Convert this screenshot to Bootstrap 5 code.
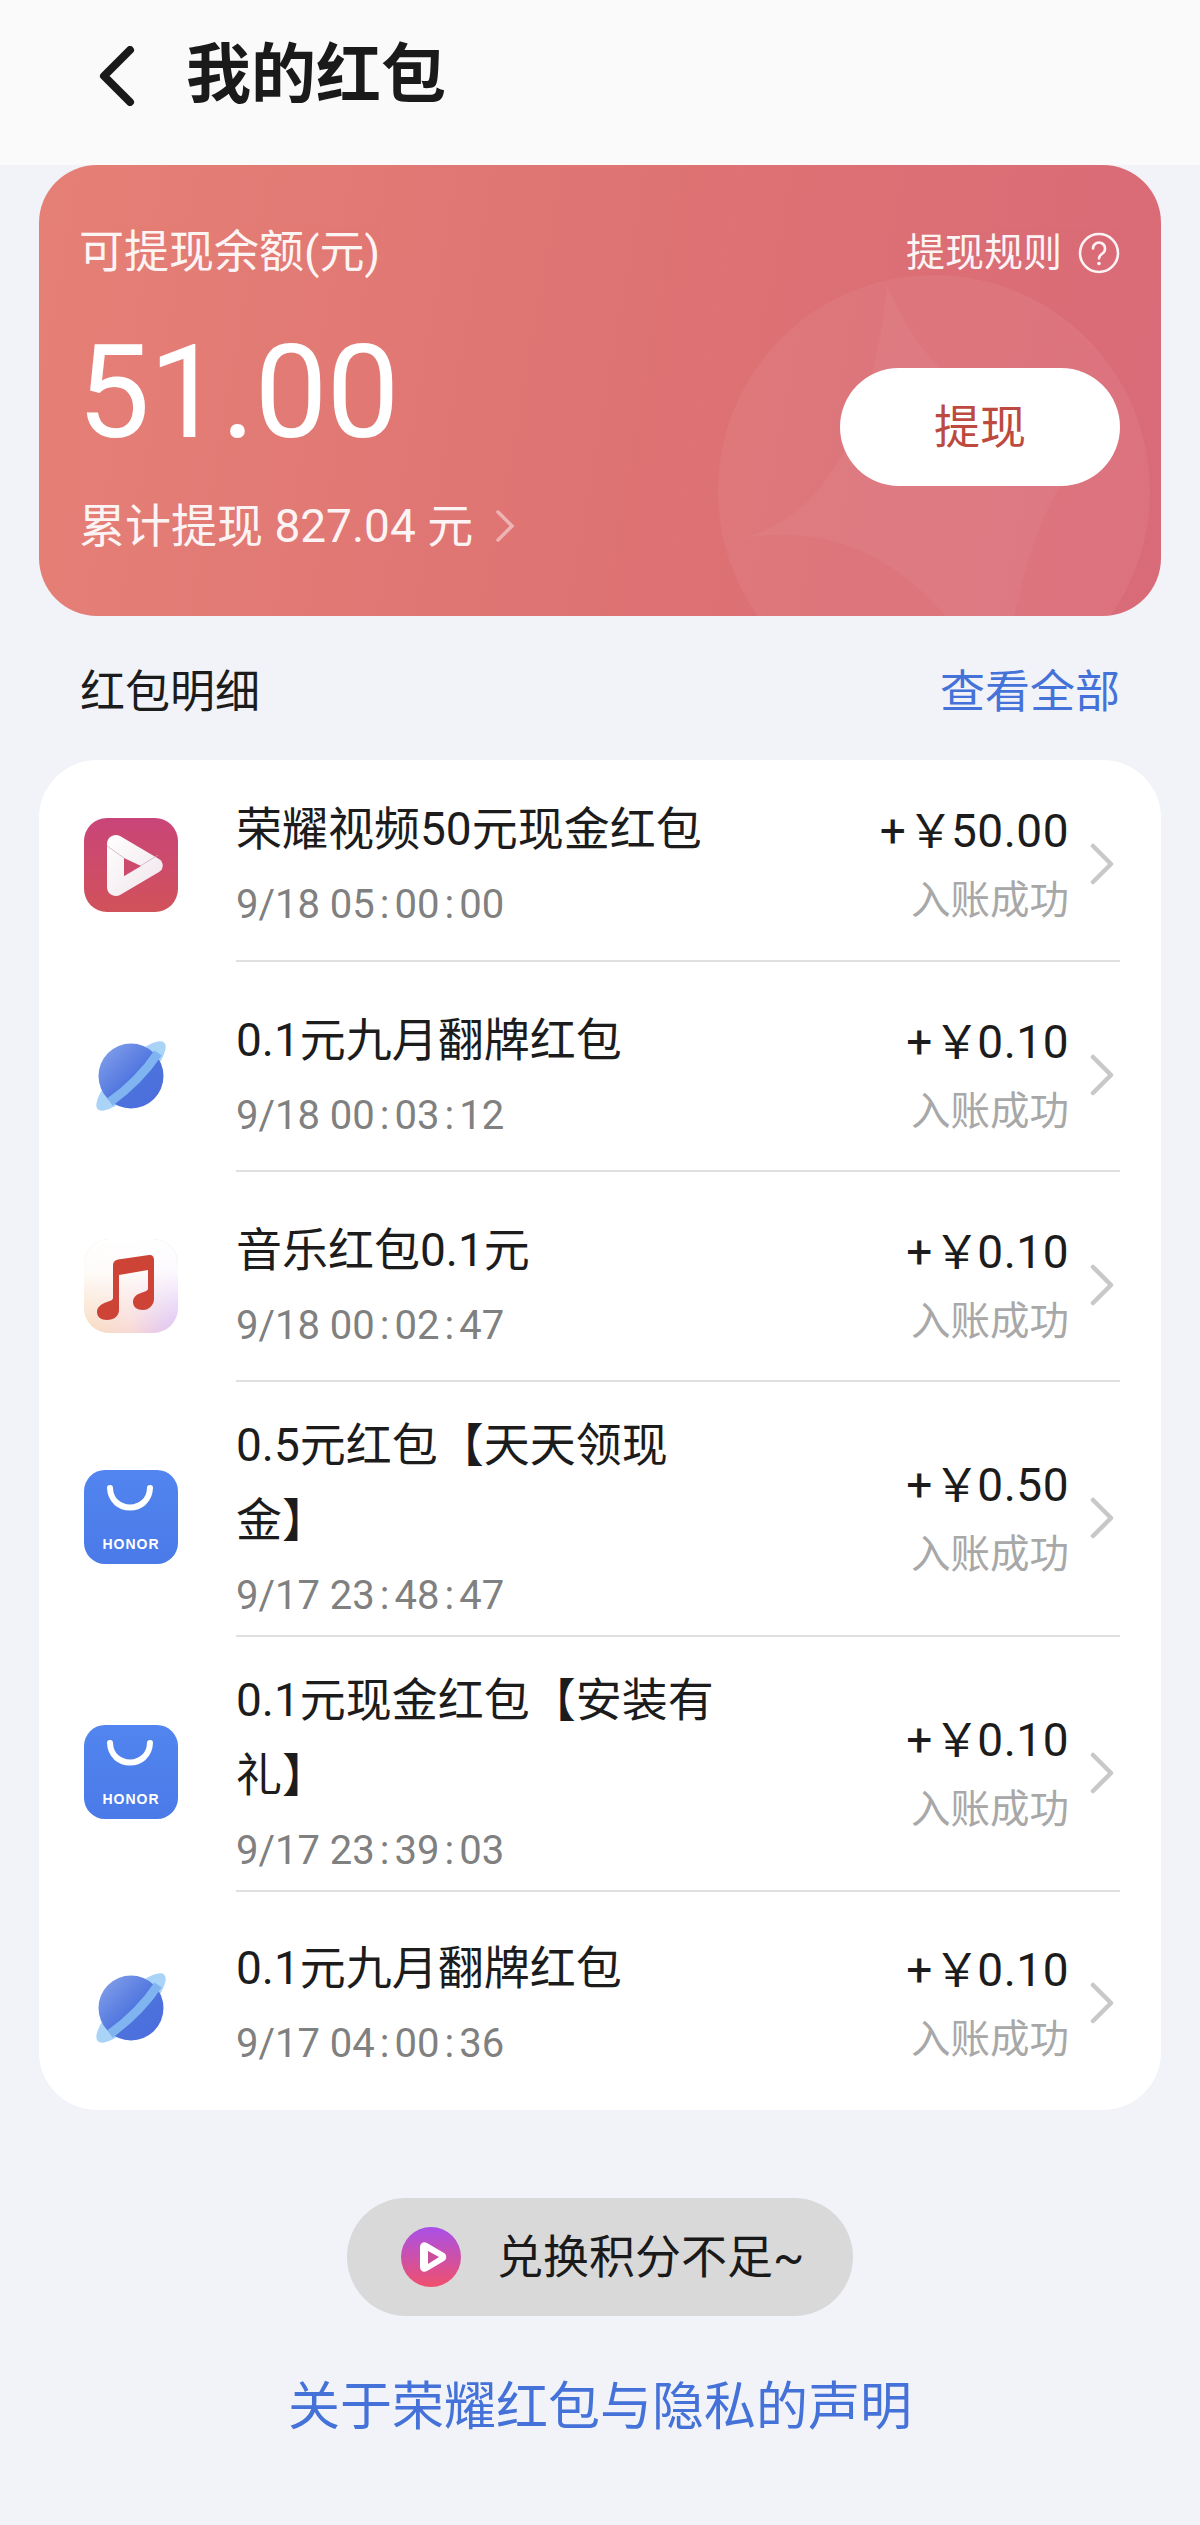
<!DOCTYPE html>
<html lang="zh-CN">
<head>
<meta charset="utf-8">
<title>我的红包</title>
<link rel="stylesheet" href="https://cdn.jsdelivr.net/npm/bootstrap@5.3.0/dist/css/bootstrap.min.css">
<style>
html,body{margin:0;padding:0}
body{width:1200px;height:2525px;overflow:hidden;background:#f1f3f9;color:#1c1c1c;font-family:Roboto,"Noto Sans CJK SC",sans-serif}
.top-head{height:165px;background:#fafafa;padding-left:98px;padding-bottom:14px;gap:48px}
.top-head h1{font-size:65px;line-height:1;margin:0;font-weight:700;color:#1a1a1a}
.hero{height:451px;margin:0 39px;border-radius:58px;background:linear-gradient(100deg,#e58076 0%,#de7273 55%,#d96a78 100%);color:#fff;overflow:hidden;padding:60px 41px 0 40px}
.hero-art{position:absolute;left:679px;top:110px;width:432px;height:432px}
.hero-l{font-size:45px;line-height:56px;opacity:.92}
.hero-r{font-size:39px;line-height:56px;gap:16px;opacity:.92}
.hero-num{font-size:130px;line-height:130px;margin-top:47px;letter-spacing:-1px;margin-left:-2px}
.hero-sum{font-size:46px;line-height:56px;margin-top:40px;gap:22px;opacity:.92}
.hero-btn{position:absolute;right:41px;top:203px;width:280px;height:118px;border-radius:59px;background:#fff;color:#bd4a40;border:0;font-size:46px;line-height:1;padding:0}
.sec-head{height:144px;padding:10px 41px 0;margin:0 39px;font-size:45px}
.blue-t{color:#4472d8}
.sheet{margin:0 39px;background:#fff;border-radius:58px;height:1350px}
.rec{display:flex}
.rec-icon{width:197px;flex:none;padding-left:45px;padding-top:17px;display:flex;align-items:center}
.rec-body{flex:1;margin-right:41px;padding:24px 6px 7px 0;min-height:210px;border-bottom:2px solid #e0e0e0;display:flex;align-items:center;box-sizing:border-box}
.rec.first .rec-body{min-height:202px;padding-top:15px}
.rec.tall .rec-body{padding-top:23px;padding-bottom:5px}
.rec.tall .rec-icon{padding-top:15px}
.rec.last .rec-body{min-height:219px;padding-top:21px;padding-bottom:19px;border-bottom:0}
.rec.last .rec-icon{padding-top:12px}
.rec.first .rec-icon{padding-top:8px}
.rec-text{width:480px;flex:none;padding-top:3px;margin-bottom:-3px}
.rec-title{font-size:46px;line-height:75px;color:#1c1c1c}
.rec-date{font-size:40px;line-height:75px;color:#808080}
.rec-date i{font-style:normal;margin:0 5px}
.rec-side{margin-left:auto;text-align:right}
.rec-amt{font-size:46px;line-height:70px;color:#1c1c1c;letter-spacing:.5px}
.rec-amt b{font-weight:400;font-family:"Noto Sans CJK SC",sans-serif;margin:0 -3px 0 1px}
.rec-st{font-size:39.5px;line-height:70px;color:#a8a8a8}
.rec-arrow{margin-left:21px;flex:none}
.toast-pill{width:506px;height:118px;margin:88px auto 0;border-radius:59px;background:#d9d9d9;padding-left:54px;gap:36px;font-size:46px;line-height:1;color:#1a1a1a}
.foot-link{margin-top:61px;font-size:52px;line-height:62px;text-align:center}
</style>
</head>
<body>
<header class="top-head d-flex align-items-center">
  <svg width="40" height="60" viewBox="0 0 40 60" aria-hidden="true"><path d="M32 4 6 30l26 26" fill="none" stroke="#1a1a1a" stroke-width="8" stroke-linecap="round" stroke-linejoin="round"/></svg>
  <h1>我的红包</h1>
</header>

<section class="hero position-relative">
  <svg class="hero-art" viewBox="0 0 432 432" aria-hidden="true">
    <circle cx="216" cy="216" r="216" fill="#fff" fill-opacity=".055"/>
    <path d="M169 10Q235 170 422 160Q318 154 282 425Q186 236 25 263Q147 230 169 10Z" fill="#fff" fill-opacity=".04"/>
  </svg>
  <div class="d-flex justify-content-between align-items-center position-relative">
    <div class="hero-l">可提现余额(元)</div>
    <div class="hero-r d-flex align-items-center">提现规则
      <svg width="42" height="42" viewBox="0 0 42 42" aria-hidden="true"><circle cx="21" cy="21" r="19" fill="none" stroke="#fff" stroke-width="2.6"/><path d="M15 16.5a6 6 0 1 1 9.4 5c-2.2 1.5-3.4 2.4-3.4 5" fill="none" stroke="#fff" stroke-width="2.6" stroke-linecap="round"/><circle cx="21" cy="31.5" r="1.8" fill="#fff"/></svg>
    </div>
  </div>
  <div class="hero-num position-relative">51.00</div>
  <div class="hero-sum d-flex align-items-center position-relative">累计提现 827.04 元
    <svg width="20" height="34" viewBox="0 0 20 34" aria-hidden="true"><path d="M3 3l14 14L3 31" fill="none" stroke="#fff" stroke-opacity=".5" stroke-width="3.5" stroke-linecap="round"/></svg>
  </div>
  <button class="hero-btn" type="button">提现</button>
</section>

<div class="sec-head d-flex justify-content-between align-items-center">
  <span>红包明细</span><span class="blue-t">查看全部</span>
</div>

<svg width="0" height="0" class="position-absolute" aria-hidden="true">
  <defs>
    <linearGradient id="gv" x1="0" y1="0" x2="0" y2="1"><stop offset="0" stop-color="#c94579"/><stop offset="1" stop-color="#d1525a"/></linearGradient>
    <linearGradient id="gw" x1="0" y1="0" x2="1" y2="1"><stop offset="0" stop-color="#fff"/><stop offset="1" stop-color="#efe4ea"/></linearGradient>
    <linearGradient id="gp" x1="0" y1="0" x2="1" y2="1"><stop offset="0" stop-color="#8aa6ec"/><stop offset=".55" stop-color="#4d73de"/><stop offset="1" stop-color="#4a6cdb"/></linearGradient>
    <linearGradient id="gh" x1="0" y1="0" x2="0" y2="1"><stop offset="0" stop-color="#5285ef"/><stop offset="1" stop-color="#4a7ae8"/></linearGradient>
    <linearGradient id="gm" x1="0" y1="0" x2="1" y2="0"><stop offset="0" stop-color="#f8dcc0"/><stop offset=".5" stop-color="#f8d9d6"/><stop offset="1" stop-color="#dcc0f6"/></linearGradient>
    <linearGradient id="gm2" x1="0" y1="0" x2="0" y2="1"><stop offset="0" stop-color="#fff"/><stop offset=".35" stop-color="#fff" stop-opacity=".9"/><stop offset="1" stop-color="#fff" stop-opacity="0"/></linearGradient>
    <linearGradient id="gt" x1="0" y1="0" x2="0" y2="1"><stop offset="0" stop-color="#a950e8"/><stop offset="1" stop-color="#f0506c"/></linearGradient>
    <symbol id="ic-video" viewBox="0 0 94 94">
      <rect width="94" height="94" rx="23" fill="url(#gv)"/>
      <path d="M23 26c0-7 7-11 13-8l39 23c5 3 5 10 0 13L36 77c-6 3-13-1-13-8Z" fill="url(#gw)"/>
      <path d="M23 28 40 40M74 37 40 58" fill="none" stroke="#c9a4b6" stroke-width=".7"/>
      <path d="M40 40 57 48 40 58Z" fill="#cc4a6c"/>
    </symbol>
    <symbol id="ic-planet" viewBox="0 0 94 94">
      <ellipse cx="47" cy="47" rx="47" ry="14" transform="rotate(-45 47 47)" fill="#a9d3f7"/>
      <circle cx="47" cy="47" r="32.5" fill="url(#gp)"/>
      <path d="M74 24C62 42 44 60 26 73" fill="none" stroke="#7fb4f1" stroke-width="9"/>
    </symbol>
    <symbol id="ic-music" viewBox="0 0 94 94">
      <rect width="94" height="94" rx="25" fill="url(#gm)"/>
      <rect width="94" height="94" rx="25" fill="url(#gm2)"/>
      <path d="M29 26c0-3 2-5 5-5.500L65 16c3-.5 5 1.500 5 4.500V60c0 6-5 11-11 11-6 0-10-3-10-8 0-5 4-8 9-9.500 3-1 6-1.500 6-4V31L35 36V71c0 6-5 10-12 10-6 0-10-3-10-8 0-5 4-8 10-10 3-1 6-2 6-4Z" fill="#cd4437"/>
    </symbol>
    <symbol id="ic-honor" viewBox="0 0 94 94">
      <rect width="94" height="94" rx="21" fill="url(#gh)"/>
      <path d="M26 18C27 44 65 44 66 18" fill="none" stroke="#fff" stroke-width="6" stroke-linecap="round"/>
      <text x="47" y="79" text-anchor="middle" font-family="'Liberation Sans',sans-serif" font-weight="700" font-size="14" letter-spacing="1" fill="#fff">HONOR</text>
    </symbol>
    <symbol id="ic-arrow" viewBox="0 0 24 42">
      <path d="M3 3 21 21 3 39" fill="none" stroke="#c8c8c8" stroke-width="4.500" stroke-linecap="round" stroke-linejoin="round"/>
    </symbol>
  </defs>
</svg>

<main class="sheet">
  <div class="rec first">
    <div class="rec-icon"><svg width="94" height="94"><use href="#ic-video"/></svg></div>
    <div class="rec-body">
      <div class="rec-text"><div class="rec-title">荣耀视频50元现金红包</div><div class="rec-date">9/18 05<i>:</i>00<i>:</i>00</div></div>
      <div class="rec-side"><div class="rec-amt">+<b>￥</b>50.00</div><div class="rec-st">入账成功</div></div>
      <svg class="rec-arrow" width="24" height="42"><use href="#ic-arrow"/></svg>
    </div>
  </div>
  <div class="rec">
    <div class="rec-icon"><svg width="94" height="94"><use href="#ic-planet"/></svg></div>
    <div class="rec-body">
      <div class="rec-text"><div class="rec-title">0.1元九月翻牌红包</div><div class="rec-date">9/18 00<i>:</i>03<i>:</i>12</div></div>
      <div class="rec-side"><div class="rec-amt">+<b>￥</b>0.10</div><div class="rec-st">入账成功</div></div>
      <svg class="rec-arrow" width="24" height="42"><use href="#ic-arrow"/></svg>
    </div>
  </div>
  <div class="rec">
    <div class="rec-icon"><svg width="94" height="94"><use href="#ic-music"/></svg></div>
    <div class="rec-body">
      <div class="rec-text"><div class="rec-title">音乐红包0.1元</div><div class="rec-date">9/18 00<i>:</i>02<i>:</i>47</div></div>
      <div class="rec-side"><div class="rec-amt">+<b>￥</b>0.10</div><div class="rec-st">入账成功</div></div>
      <svg class="rec-arrow" width="24" height="42"><use href="#ic-arrow"/></svg>
    </div>
  </div>
  <div class="rec tall">
    <div class="rec-icon"><svg width="94" height="94"><use href="#ic-honor"/></svg></div>
    <div class="rec-body">
      <div class="rec-text"><div class="rec-title">0.5元红包【天天领现金】</div><div class="rec-date">9/17 23<i>:</i>48<i>:</i>47</div></div>
      <div class="rec-side"><div class="rec-amt">+<b>￥</b>0.50</div><div class="rec-st">入账成功</div></div>
      <svg class="rec-arrow" width="24" height="42"><use href="#ic-arrow"/></svg>
    </div>
  </div>
  <div class="rec tall">
    <div class="rec-icon"><svg width="94" height="94"><use href="#ic-honor"/></svg></div>
    <div class="rec-body">
      <div class="rec-text"><div class="rec-title">0.1元现金红包【安装有礼】</div><div class="rec-date">9/17 23<i>:</i>39<i>:</i>03</div></div>
      <div class="rec-side"><div class="rec-amt">+<b>￥</b>0.10</div><div class="rec-st">入账成功</div></div>
      <svg class="rec-arrow" width="24" height="42"><use href="#ic-arrow"/></svg>
    </div>
  </div>
  <div class="rec last">
    <div class="rec-icon"><svg width="94" height="94"><use href="#ic-planet"/></svg></div>
    <div class="rec-body">
      <div class="rec-text"><div class="rec-title">0.1元九月翻牌红包</div><div class="rec-date">9/17 04<i>:</i>00<i>:</i>36</div></div>
      <div class="rec-side"><div class="rec-amt">+<b>￥</b>0.10</div><div class="rec-st">入账成功</div></div>
      <svg class="rec-arrow" width="24" height="42"><use href="#ic-arrow"/></svg>
    </div>
  </div>
</main>

<div class="toast-pill d-flex align-items-center">
  <svg width="60" height="60" viewBox="0 0 60 60" aria-hidden="true"><circle cx="30" cy="30" r="30" fill="url(#gt)"/><path d="M19 20c0-4 4-6 7-4l17 10c3 2 3 6 0 8L26 44c-3 2-7 0-7-4Z" fill="#fff"/><path d="M27 24l11 6-11 7Z" fill="#c94f9c"/></svg>
  <span>兑换积分不足~</span>
</div>
<div class="foot-link blue-t">关于荣耀红包与隐私的声明</div>
</body>
</html>
